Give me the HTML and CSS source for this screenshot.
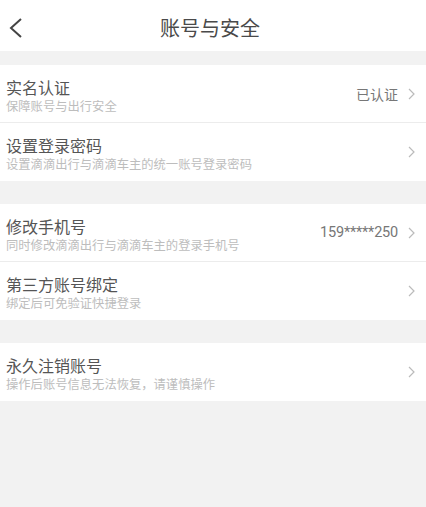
FILE: index.html
```html
<!DOCTYPE html>
<html lang="zh-CN">
<head>
<meta charset="utf-8">
<title>账号与安全</title>
<link rel="stylesheet" href="styles.css">
</head>
<body>
<div class="page">
  <header class="topbar">
    <span class="back">
      <svg width="14" height="20" viewBox="0 0 14 20"><polyline points="12,1 2,10 12,19" fill="none" stroke="#444" stroke-width="2"/></svg>
    </span>
    <h1 class="title">账号与安全</h1>
  </header>

  <section class="group">
    <div class="row">
      <div class="text">
        <div class="name">实名认证</div>
        <div class="desc">保障账号与出行安全</div>
      </div>
      <div class="side"><span class="value">已认证</span><span class="chev"><svg width="7" height="12" viewBox="0 0 7 12"><polyline points="1,1 6,6 1,11" fill="none" stroke="#bbb" stroke-width="1.2"/></svg></span></div>
    </div>
    <div class="row">
      <div class="text">
        <div class="name">设置登录密码</div>
        <div class="desc">设置滴滴出行与滴滴车主的统一账号登录密码</div>
      </div>
      <div class="side"><span class="chev"><svg width="7" height="12" viewBox="0 0 7 12"><polyline points="1,1 6,6 1,11" fill="none" stroke="#bbb" stroke-width="1.2"/></svg></span></div>
    </div>
  </section>

  <section class="group">
    <div class="row">
      <div class="text">
        <div class="name">修改手机号</div>
        <div class="desc">同时修改滴滴出行与滴滴车主的登录手机号</div>
      </div>
      <div class="side"><span class="value num">159*****250</span><span class="chev"><svg width="7" height="12" viewBox="0 0 7 12"><polyline points="1,1 6,6 1,11" fill="none" stroke="#bbb" stroke-width="1.2"/></svg></span></div>
    </div>
    <div class="row">
      <div class="text">
        <div class="name">第三方账号绑定</div>
        <div class="desc">绑定后可免验证快捷登录</div>
      </div>
      <div class="side"><span class="chev"><svg width="7" height="12" viewBox="0 0 7 12"><polyline points="1,1 6,6 1,11" fill="none" stroke="#bbb" stroke-width="1.2"/></svg></span></div>
    </div>
  </section>

  <section class="group">
    <div class="row">
      <div class="text">
        <div class="name">永久注销账号</div>
        <div class="desc">操作后账号信息无法恢复，请谨慎操作</div>
      </div>
      <div class="side"><span class="chev"><svg width="7" height="12" viewBox="0 0 7 12"><polyline points="1,1 6,6 1,11" fill="none" stroke="#bbb" stroke-width="1.2"/></svg></span></div>
    </div>
  </section>
</div>
</body>
</html>
```

FILE: styles.css
```css
html, body {
  margin: 0;
  padding: 0;
  background: #f2f2f2;
  font-family: "Noto Sans CJK SC", "Noto Sans", sans-serif;
}
.page {
  width: 426px;
  min-height: 507px;
  display: flex;
  flex-direction: column;
}
.topbar {
  height: 51px;
  box-sizing: border-box;
  padding-top: 4px;
  background: #fff;
  display: flex;
  align-items: center;
  justify-content: center;
  position: relative;
  margin-bottom: 14px;
}
.back {
  position: absolute;
  left: 9px;
  top: 18px;
  display: flex;
}
.title {
  margin: 0;
  font-size: 20px;
  font-weight: 400;
  color: #4a4a4a;
  line-height: 24px;
  padding-right: 6px;
}
.group {
  background: #fff;
  margin-bottom: 23px;
}
.row {
  height: 57px;
  display: flex;
  align-items: center;
  padding: 0 11px 0 6px;
  border-bottom: 1px solid #ececec;
}
.row:last-child {
  border-bottom: none;
  height: 58px;
}
.text {
  flex: 1;
  align-self: stretch;
  box-sizing: border-box;
  padding-top: 12px;
  display: flex;
  flex-direction: column;
}
.name {
  font-size: 16px;
  line-height: 20px;
  color: #555;
}
.desc {
  margin-top: 1px;
  font-size: 12.3px;
  line-height: 16px;
  color: #bdbdbd;
}
.side {
  display: flex;
  align-items: center;
  gap: 10px;
}
.value {
  font-size: 14px;
  color: #777;
}
.num {
  font-family: Roboto, "Noto Sans", sans-serif;
  font-size: 14.5px;
  letter-spacing: -0.2px;
}
.chev {
  display: flex;
}
```
